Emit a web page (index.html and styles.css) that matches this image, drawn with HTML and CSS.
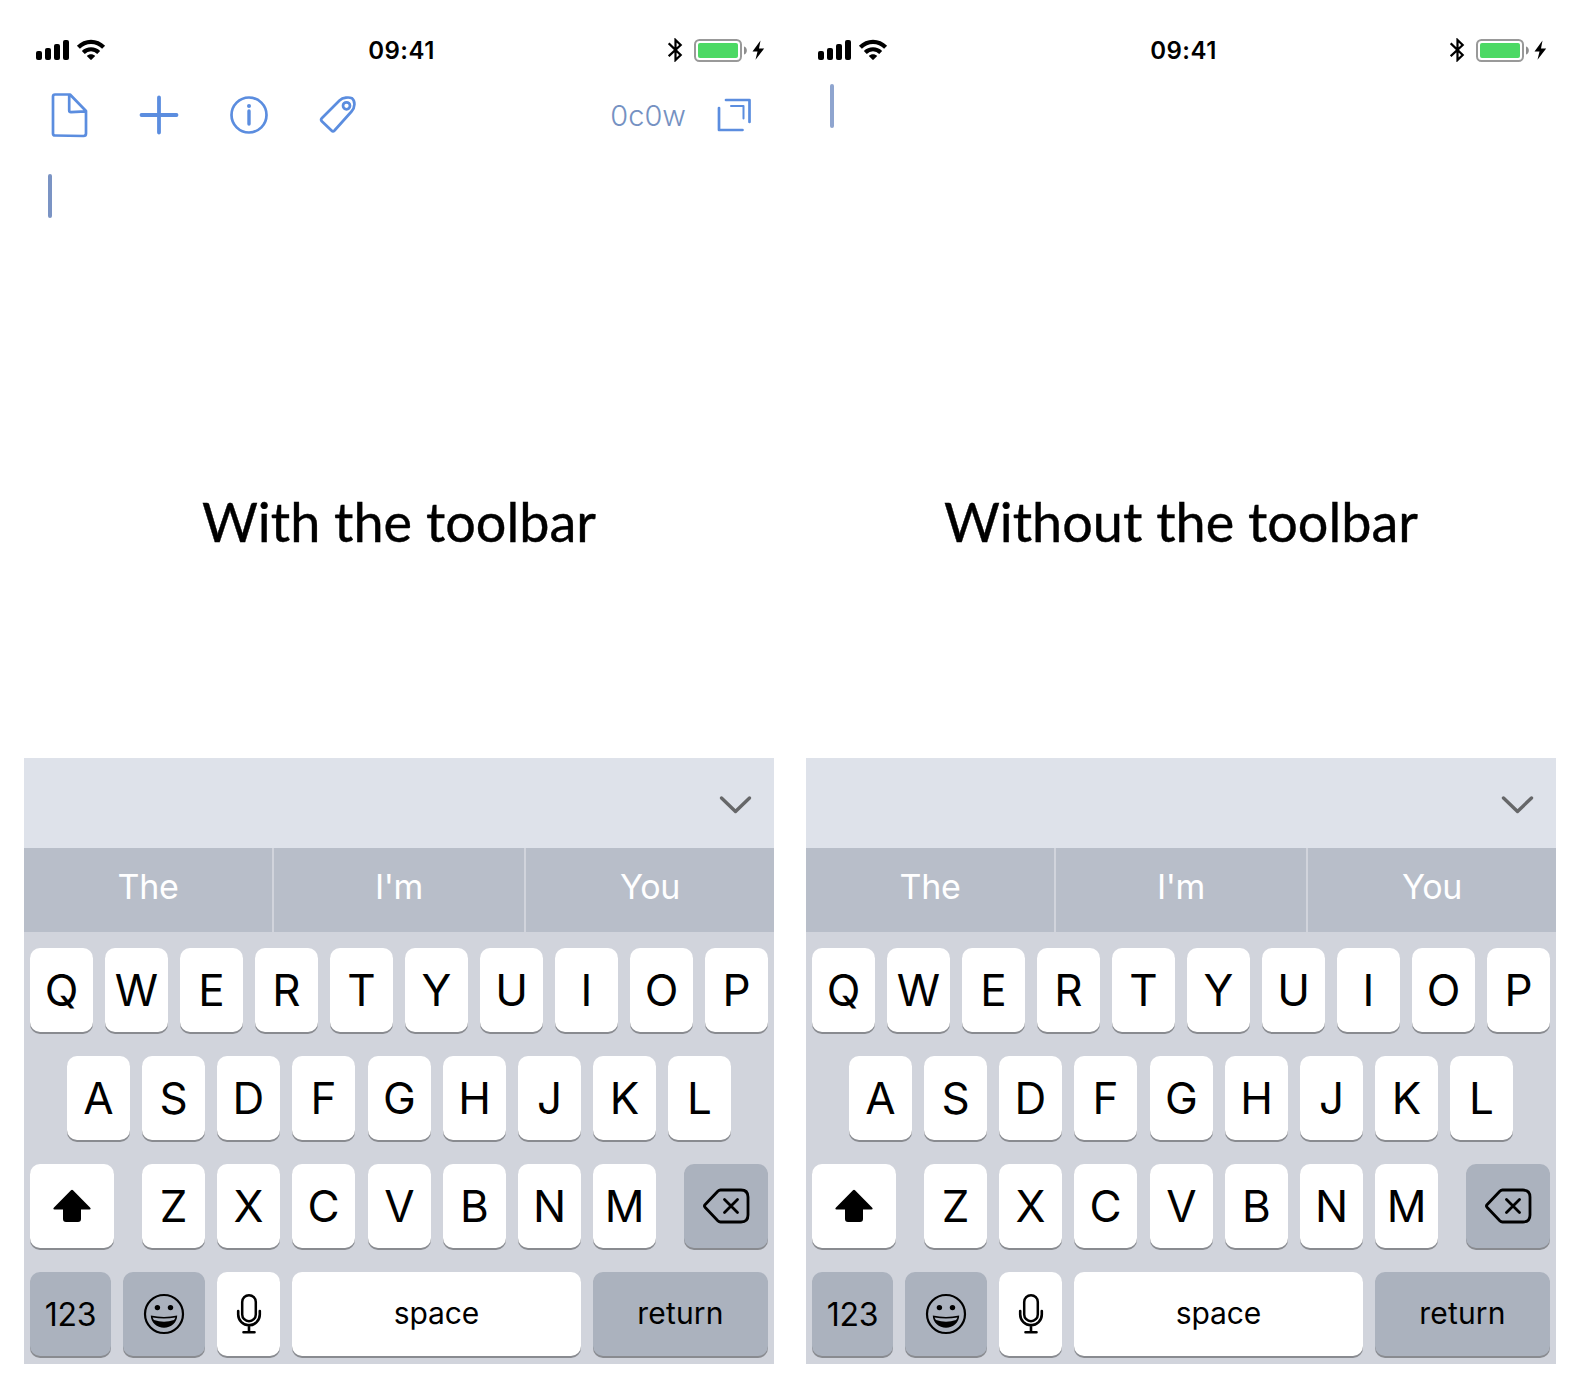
FILE: index.html
```html
<!DOCTYPE html>
<html lang="en">
<head>
<meta charset="utf-8">
<title>Toolbar comparison</title>
<link rel="stylesheet" href="styles.css">
</head>
<body>
<svg class="sprite" aria-hidden="true">
  <symbol id="signal" viewBox="0 0 70 24">
    <rect x="0" y="13" width="6" height="9" rx="2"/><rect x="9" y="10" width="6" height="12" rx="2"/><rect x="18" y="6" width="6" height="16" rx="2"/><rect x="27" y="2" width="6" height="20" rx="2"/>
    <g fill="none" stroke="#000" stroke-width="4.2"><path d="M42.400 9.300C49.500 2.100 60.500 2.100 67.600 9.300"/><path d="M47.300 14.400C51.600 10.200 58.400 10.200 62.700 14.400"/></g>
    <path d="M50.800 18C53 15.500 57 15.500 59.200 18L55.700 21.600Q55 22.200 54.300 21.600Z"/>
  </symbol>
  <symbol id="power" viewBox="0 0 98 24">
    <path d="M.7 5.300L12.700 17 7.500 22V2L12.700 7 .7 18.200" fill="none" stroke="#000" stroke-width="2.2"/>
    <rect x="27" y="2" width="46" height="21" rx="4.500" fill="none" stroke="#999" stroke-width="2"/>
    <rect x="30" y="5" width="40" height="15" rx="2" fill="#4cd964"/>
    <path d="M76 8.500C79.800 9.500 79.800 15.500 76 16.500Z" fill="#8e8e8e"/>
    <path d="M92.500 2.500L84.500 13.500H89.500L87.500 21.800 96.200 10.400H91Z"/>
  </symbol>
  <symbol id="chevron" viewBox="0 0 34 20"><path d="M3.500 3L17.500 16.500 31.500 3" fill="none" stroke="#666769" stroke-width="3.400" stroke-linecap="round" stroke-linejoin="round"/></symbol>
  <symbol id="shift" viewBox="0 0 40 34"><path d="M19 1.300Q20 .4 21 1.300L38 18.600Q39.500 20.500 37.500 20.500H29V30Q29 33 26 33H14Q11 33 11 30V20.500H2.500Q.5 20.500 2 18.600Z"/></symbol>
  <symbol id="erase" viewBox="0 0 48 36"><path d="M18.500 2H39Q46 2 46 9V27Q46 34 39 34H18.500Q17 34 15.800 32.800L3 19.200Q1.900 18 3 16.800L15.800 3.200Q17 2 18.500 2ZM22.500 11.500L35.500 24.500M35.500 11.500L22.500 24.500" fill="none" stroke="#000" stroke-width="2.800" stroke-linecap="round"/></symbol>
  <symbol id="smile" viewBox="0 0 42 42"><circle cx="21" cy="21" r="19" fill="none" stroke="#000" stroke-width="2.200"/><circle cx="14.400" cy="14.600" r="2.700"/><circle cx="27.500" cy="14.600" r="2.700"/><path d="M7.800 22.600Q21 25.500 34.200 22.600C34.200 29.500 28 34.800 21 34.800S7.800 29.500 7.800 22.600Z"/><path d="M9.600 24.500Q21 26.600 32.400 24.500Q31.800 26.300 31 27Q21 30.500 11 27Q10.200 26.300 9.600 24.500Z" fill="#abb2be"/></symbol>
  <symbol id="mic" viewBox="0 0 26 42"><rect x="6.200" y="2.200" width="13.600" height="26" rx="6.800" fill="none" stroke="#000" stroke-width="2.500"/><path d="M2.200 18V21.500A10.800 10.800 0 0 0 23.800 21.500V18M13 32V38M7.500 39.200H18.500" fill="none" stroke="#000" stroke-width="2.600" stroke-linecap="round"/></symbol>
</svg>

<main class="screens">
  <section class="phone">
    <header class="status">
      <svg class="signal"><use href="#signal"/></svg>
      <time class="clock">09:41</time>
      <svg class="power"><use href="#power"/></svg>
    </header>
    <nav class="toolbar">
      <svg class="tool" viewBox="0 0 44 48"><path d="M6 3.500H21L37 20V42.500Q37 45 34.500 45L6 44.500Q4 44.500 4 42.500V5.500Q4 3.500 6 3.500ZM20.200 4V19.500Q20.200 21.200 22 21.200L36.500 20.300"/></svg>
      <svg class="tool plus" viewBox="0 0 44 48"><path d="M22 6.500V41.500M4.500 24H39.500"/></svg>
      <svg class="tool info" viewBox="0 0 44 48"><circle cx="22" cy="24" r="17.500"/><path d="M22 20V33" class="stem"/><circle class="dot" cx="22" cy="15" r="2"/></svg>
      <svg class="tool tag" viewBox="0 0 44 48"><path d="M4.800 27.200L22.500 9.500C26 6.200 32 6 35 7.200C38.400 10 38.200 16.500 34.500 20.500L17.500 39.500Q16 41 14.500 39.500L4.800 30.200Q3.300 28.700 4.800 27.200Z"/><circle cx="29.500" cy="14.800" r="3.500"/></svg>
      <span class="count">0c0w</span>
      <svg class="tool expand" viewBox="0 0 44 48"><path d="M14 9H37.500V31M7 17V39H30.500"/><path class="thin" d="M19 15H31.500V27.500"/></svg>
    </nav>
    <div class="page"><i class="caret"></i></div>
    <h1 class="caption">With the toolbar</h1>
    <div class="keyboard">
      <div class="dismiss"><svg><use href="#chevron"/></svg></div>
      <div class="hints"><span>The</span><span>I'm</span><span>You</span></div>
      <div class="keys">
        <div class="row"><b>Q</b><b>W</b><b>E</b><b>R</b><b>T</b><b>Y</b><b>U</b><b>I</b><b>O</b><b>P</b></div>
        <div class="row home"><b>A</b><b>S</b><b>D</b><b>F</b><b class="mid">G</b><b>H</b><b>J</b><b>K</b><b>L</b></div>
        <div class="row lower"><b class="shift"><svg><use href="#shift"/></svg></b><b>Z</b><b>X</b><b>C</b><b class="mid">V</b><b>B</b><b>N</b><b>M</b><b class="erase dark"><svg><use href="#erase"/></svg></b></div>
        <div class="row"><b class="digits dark">123</b><b class="emoji dark"><svg><use href="#smile"/></svg></b><b class="mic"><svg><use href="#mic"/></svg></b><b class="space">space</b><b class="return dark">return</b></div>
      </div>
    </div>
  </section>

  <section class="phone">
    <header class="status">
      <svg class="signal"><use href="#signal"/></svg>
      <time class="clock">09:41</time>
      <svg class="power"><use href="#power"/></svg>
    </header>
    <div class="page bare"><i class="caret"></i></div>
    <h1 class="caption">Without the toolbar</h1>
    <div class="keyboard">
      <div class="dismiss"><svg><use href="#chevron"/></svg></div>
      <div class="hints"><span>The</span><span>I'm</span><span>You</span></div>
      <div class="keys">
        <div class="row"><b>Q</b><b>W</b><b>E</b><b>R</b><b>T</b><b>Y</b><b>U</b><b>I</b><b>O</b><b>P</b></div>
        <div class="row home"><b>A</b><b>S</b><b>D</b><b>F</b><b class="mid">G</b><b>H</b><b>J</b><b>K</b><b>L</b></div>
        <div class="row lower"><b class="shift"><svg><use href="#shift"/></svg></b><b>Z</b><b>X</b><b>C</b><b class="mid">V</b><b>B</b><b>N</b><b>M</b><b class="erase dark"><svg><use href="#erase"/></svg></b></div>
        <div class="row"><b class="digits dark">123</b><b class="emoji dark"><svg><use href="#smile"/></svg></b><b class="mic"><svg><use href="#mic"/></svg></b><b class="space">space</b><b class="return dark">return</b></div>
      </div>
    </div>
  </section>
</main>
</body>
</html>
```
FILE: styles.css
```css
* { box-sizing: border-box; }
body { margin: 0; background: #fff; color: #000; font-family: Inter, "Liberation Sans", sans-serif; }
svg { display: block; flex: none; }
.sprite { display: none; }

.screens { display: flex; gap: 32px; padding: 24px 24px 27px; height: 1391px; }
.phone { width: 750px; height: 1340px; display: flex; flex-direction: column; }

.status { height: 56px; padding: 14px 8px 0 12px; display: grid; grid-template-columns: 1fr auto 1fr; align-items: start; flex: none; }
.signal { width: 70px; height: 24px; }
.clock { font-size: 24px; font-weight: 600; line-height: 25px; letter-spacing: .5px; padding-left: 1px; }
.power { width: 98px; height: 24px; justify-self: end; }

.toolbar { height: 70px; padding: 11px 3px 0 25px; display: flex; flex: none; }
.tool { width: 44px; height: 48px; fill: none; stroke: #5b8ddf; stroke-width: 2.7; stroke-linejoin: round; stroke-linecap: round; }
.plus { margin-left: 44px; stroke-width: 3.8; }
.info { margin-left: 46px; }
.stem { stroke-width: 3.4; }
.dot { fill: #5b8ddf; stroke: none; }
.tag { margin-left: 46px; }
.count { margin-left: auto; font-size: 29px; font-weight: 300; line-height: 50px; color: #7591c2; }
.expand { margin-left: 26px; margin-right: 15px; }
.thin { stroke-width: 2; }

.page { flex: none; height: 332px; padding: 24px 24px 0; }
.page.bare { height: 402px; padding-top: 4px; }
.caret { display: block; width: 4px; height: 44px; border-radius: 2px; background: #7b94c4; }
.bare .caret { background: #8fa5cf; }

.caption { margin: 0; height: 276px; flex: none; font: 400 54px/79px Lato, sans-serif; text-align: center; white-space: nowrap; -webkit-text-stroke: .4px #000; }

.keyboard { background: #d1d4dc; height: 606px; flex: none; }
.dismiss { height: 90px; background: #dee2ea; display: flex; justify-content: flex-end; padding: 37px 22px 0 0; }
.dismiss svg { width: 34px; height: 20px; }
.hints { height: 84px; display: grid; grid-template-columns: 248px 250px 248px; gap: 2px; background: #d1d4dc; }
.hints span { background: #b8bec9; color: #fff; font-size: 34px; line-height: 78px; text-align: center; letter-spacing: -.3px; }
.keys { padding: 16px 6px 0; display: flex; flex-direction: column; gap: 24px; }
.row { display: flex; gap: 12px; }
.row b { width: 63px; height: 84px; border-radius: 10px; background: #fff; box-shadow: 0 2px 0 #898b90; font-size: 44px; font-weight: 400; display: flex; align-items: center; justify-content: center; }
.home { padding-left: 37px; }
.row b.mid { margin-left: 1px; }
.row b.dark { background: #abb2be; }
.row b.shift { width: 84px; margin-right: 16px; }
.row b.erase { width: 84px; margin-left: 16px; }
.row b.digits { width: 81px; font-size: 32px; letter-spacing: -.2px; }
.row b.emoji { width: 82px; }
.row b.space { width: 289px; font-size: 30px; padding-bottom: 3px; letter-spacing: -.1px; }
.row b.return { width: 175px; font-size: 30px; padding-bottom: 3px; letter-spacing: .2px; }
.shift svg { width: 40px; height: 34px; }
.erase svg { width: 48px; height: 36px; }
.emoji svg { width: 42px; height: 42px; }
.mic svg { width: 26px; height: 42px; }
```
